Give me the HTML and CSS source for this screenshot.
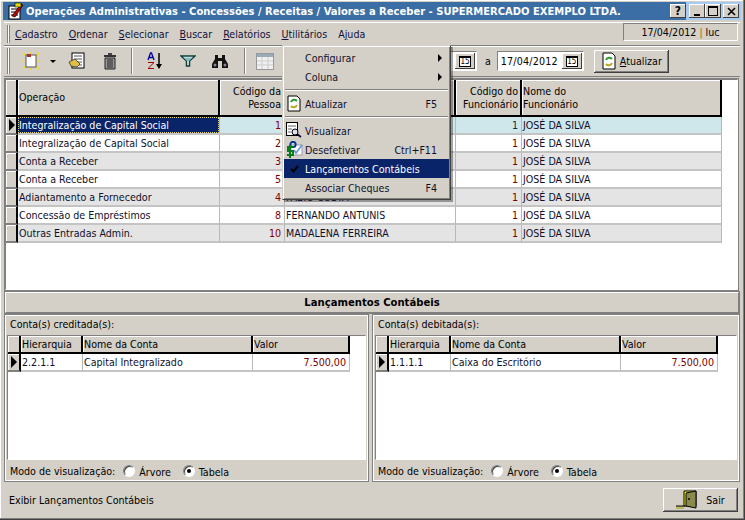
FILE: index.html
```html
<!DOCTYPE html>
<html lang="pt">
<head>
<meta charset="utf-8">
<title>Operações Administrativas</title>
<link rel="stylesheet" href="styles.css">
</head>
<body>
<div class="window">
  <div class="titlebar">
    <svg class="app-icon" width="18" height="18" viewBox="0 0 18 18"><rect x="3" y="4" width="11" height="13" fill="#fff" stroke="#000"/><path d="M5 7h7M5 10h7M5 13h7" stroke="#000"/><path d="M6 14L15 2l2 1L9 15z" fill="#c00" stroke="#000" stroke-width=".7"/><rect x="9" y="1" width="6" height="4" fill="#e8d800" stroke="#000" stroke-width=".6"/></svg>
    <span class="title-text">Operações Administrativas - Concessões / Receitas / Valores a Receber - SUPERMERCADO EXEMPLO LTDA.</span>
    <span class="cap-btn help">?</span>
    <div class="caption-buttons">
      <span class="cap-btn"><svg width="9" height="9" viewBox="0 0 9 9"><rect x="1" y="7" width="6" height="2" fill="#000"/></svg></span>
      <span class="cap-btn"><svg width="10" height="10" viewBox="0 0 10 10"><rect x=".5" y=".5" width="9" height="9" fill="none" stroke="#000"/><rect y="0" width="10" height="2"/></svg></span>
      <span class="cap-gap"></span>
      <span class="cap-btn"><svg width="9" height="9" viewBox="0 0 9 9"><path d="M1 1l7 7M8 1L1 8" stroke="#000" stroke-width="1.6"/></svg></span>
    </div>
  </div>

  <div class="menubar">
    <span class="grip"></span>
    <span class="menu-item"><u>C</u>adastro</span>
    <span class="menu-item"><u>O</u>rdenar</span>
    <span class="menu-item"><u>S</u>elecionar</span>
    <span class="menu-item"><u>B</u>uscar</span>
    <span class="menu-item"><u>R</u>elatórios</span>
    <span class="menu-item"><u>U</u>tilitários</span>
    <span class="menu-item">A<u>j</u>uda</span>
    <div class="session">17/04/2012 <span class="session-sep">|</span> luc</div>
  </div>

  <div class="toolbar">
    <span class="grip tall"></span>
    <span class="tool t-new"><svg width="18" height="18" viewBox="0 0 18 18"><path d="M1 1l3 3M17 1l-3 3M1 17l3-3M17 17l-3-3M9 0v2M0 9h2M16 9h2M9 16v2" stroke="#f0e000" stroke-width="1.4"/><rect x="4" y="3" width="10" height="12" fill="#fff" stroke="#555"/><rect x="5" y="2" width="4" height="3" fill="#a33"/></svg></span>
    <span class="tool-arrow"></span>
    <span class="tool t-edit"><svg width="18" height="18" viewBox="0 0 18 18"><rect x="4" y="1" width="12" height="15" fill="#fff" stroke="#000"/><path d="M6 4h8M6 7h8M8 10h6M8 13h6" stroke="#555"/><path d="M1 10l6-3 5 5-3 3-6-1z" fill="#e0c040" stroke="#333" stroke-width=".8"/></svg></span>
    <span class="tool t-trash"><svg width="14" height="17" viewBox="0 0 14 17"><rect x="5" y="0" width="4" height="2" fill="#444"/><rect x="1" y="2" width="12" height="2" fill="#333"/><path d="M2 5h10v11H2z" fill="#999" stroke="#222"/><path d="M5 6v9M7 6v9M9 6v9" stroke="#222"/></svg></span>
    <span class="tool-sep s1"></span>
    <span class="tool t-sort"><svg width="16" height="18" viewBox="0 0 16 18"><path d="M1 8l2.500-7h1L7 8M2 5.500h4" fill="none" stroke="#0000a0" stroke-width="1.300"/><path d="M1 10h6v1L2 16h5v1H1v-1l5-5H1z" fill="#900"/><path d="M12 1v13" stroke="#000" stroke-width="1.500"/><path d="M9 12h6l-3 5z" fill="#000"/></svg></span>
    <span class="tool t-filter"><svg width="16" height="12" viewBox="0 0 16 12"><path d="M1 1h14L9.500 6v5h-3V6z" fill="#fff" stroke="#103c3c" stroke-width="1.500"/><path d="M3.500 2.500h9L9 6H7z" fill="#7fc0bc"/></svg></span>
    <span class="tool t-find"><svg width="16" height="14" viewBox="0 0 16 14"><path d="M3 1h3v3h4V1h3v4l3 5v4h-6V7H6v7H0v-4l3-5z" fill="#111"/><circle cx="3" cy="11" r="1.500" fill="#889"/><circle cx="13" cy="11" r="1.500" fill="#889"/></svg></span>
    <span class="tool-sep s2"></span>
    <span class="tool t-cal"><svg width="18" height="17" viewBox="0 0 18 17"><rect x=".5" y=".5" width="17" height="16" fill="#f0f0f0" stroke="#999"/><rect x="1" y="1" width="16" height="3" fill="#9ab"/><path d="M1 8h16M1 12h16M6 4v12M12 4v12" stroke="#ccc"/></svg></span>
    <span class="date-from">
      <span class="date-value">17/04/2012</span>
      <span class="cal-btn"><span class="cal-face">15</span></span>
    </span>
    <span class="date-a">a</span>
    <span class="date-to">
      <span class="date-value">17/04/2012</span>
      <span class="cal-btn"><span class="cal-face">15</span></span>
    </span>
    <span class="btn btn-refresh">
      <svg class="refresh-ic" width="14" height="18" viewBox="0 0 14 18"><path d="M1 1h9l3 3v13H1z" fill="#fff" stroke="#000"/><path d="M4 8a3.500 3.500 0 0 1 6-1" fill="none" stroke="#2a9a2a" stroke-width="2"/><path d="M10 11a3.500 3.500 0 0 1-6 1" fill="none" stroke="#b8a820" stroke-width="2"/></svg>
      <span><u>A</u>tualizar</span>
    </span>
  </div>

  <div class="main-grid">
    <table class="grid main">
      <colgroup><col class="c-ind"><col class="c-op"><col class="c-cod"><col class="c-nome"><col class="c-func"><col class="c-nfunc"></colgroup>
      <thead>
        <tr class="tall-head"><th></th><th>Operação</th><th class="ctr">Código da<br>Pessoa</th><th></th><th class="ctr">Código do<br>Funcionário</th><th>Nome do<br>Funcionário</th></tr>
      </thead>
      <tbody>
        <tr class="current"><th class="ind"><span class="arrow"></span></th><td class="sel"><span class="focus">Integralização de Capital Social</span></td><td class="num">1</td><td></td><td class="num dark">1</td><td>JOSÉ DA SILVA</td></tr>
        <tr><th class="ind"></th><td>Integralização de Capital Social</td><td class="num">2</td><td></td><td class="num">1</td><td>JOSÉ DA SILVA</td></tr>
        <tr class="alt"><th class="ind"></th><td>Conta a Receber</td><td class="num">3</td><td></td><td class="num">1</td><td>JOSÉ DA SILVA</td></tr>
        <tr><th class="ind"></th><td>Conta a Receber</td><td class="num">5</td><td></td><td class="num">1</td><td>JOSÉ DA SILVA</td></tr>
        <tr class="alt"><th class="ind"></th><td>Adiantamento a Fornecedor</td><td class="num">4</td><td>FÁBIO COSTA</td><td class="num">1</td><td>JOSÉ DA SILVA</td></tr>
        <tr><th class="ind"></th><td>Concessão de Empréstimos</td><td class="num">8</td><td>FERNANDO ANTUNIS</td><td class="num">1</td><td>JOSÉ DA SILVA</td></tr>
        <tr class="alt"><th class="ind"></th><td>Outras Entradas Admin.</td><td class="num">10</td><td>MADALENA FERREIRA</td><td class="num">1</td><td>JOSÉ DA SILVA</td></tr>
      </tbody>
    </table>
  </div>

  <div class="section-head">Lançamentos Contábeis</div>

  <div class="panels">
    <section class="panel first">
      <div class="panel-label">Conta(s) creditada(s):</div>
      <div class="panel-grid">
        <table class="grid sub">
          <colgroup><col class="s-ind"><col class="s-h"><col class="s-n"><col class="s-v"></colgroup>
          <thead><tr><th></th><th>Hierarquia</th><th>Nome da Conta</th><th>Valor</th></tr></thead>
          <tbody><tr><th class="ind"><span class="arrow"></span></th><td>2.2.1.1</td><td>Capital Integralizado</td><td class="num">7.500,00</td></tr></tbody>
        </table>
      </div>
      <div class="mode">
        <span class="mode-label">Modo de visualização:</span>
        <span class="radio"></span><span class="radio-text">Árvore</span>
        <span class="radio on"></span><span class="radio-text">Tabela</span>
      </div>
    </section>
    <section class="panel">
      <div class="panel-label">Conta(s) debitada(s):</div>
      <div class="panel-grid">
        <table class="grid sub">
          <colgroup><col class="s-ind"><col class="s-h"><col class="s-n"><col class="s-v"></colgroup>
          <thead><tr><th></th><th>Hierarquia</th><th>Nome da Conta</th><th>Valor</th></tr></thead>
          <tbody><tr><th class="ind"><span class="arrow"></span></th><td>1.1.1.1</td><td>Caixa do Escritório</td><td class="num">7.500,00</td></tr></tbody>
        </table>
      </div>
      <div class="mode">
        <span class="mode-label">Modo de visualização:</span>
        <span class="radio"></span><span class="radio-text">Árvore</span>
        <span class="radio on"></span><span class="radio-text">Tabela</span>
      </div>
    </section>
  </div>

  <div class="statusbar">
    <span>Exibir Lançamentos Contábeis</span>
    <span class="btn btn-exit">
      <svg width="22" height="20" viewBox="0 0 22 20"><path d="M8 1h12v15H8z" fill="#ffff00" stroke="#000"/><path d="M10 3l10-2v17l-10-2z" fill="#8a8a50" stroke="#000"/><rect x="12" y="8" width="2" height="2" fill="#222"/><path d="M0 16h8v3H0z" fill="#b8b860"/><path d="M0 16h9" stroke="#000"/></svg>
      <span>Sair</span>
    </span>
  </div>

  <div class="popup">
    <div class="pop-item"><span class="pop-label">Configurar</span><span class="submenu"></span></div>
    <div class="pop-item"><span class="pop-label">Coluna</span><span class="submenu"></span></div>
    <div class="pop-sep"></div>
    <div class="pop-item">
      <svg class="pop-ic" width="14" height="17" viewBox="0 0 14 17"><path d="M1 1h9l3 3v12H1z" fill="#fff" stroke="#000"/><path d="M4 7a3.500 3.500 0 0 1 6-1" fill="none" stroke="#2a9a2a" stroke-width="2"/><path d="M10 10a3.500 3.500 0 0 1-6 1" fill="none" stroke="#b8a820" stroke-width="2"/></svg>
      <span class="pop-label">Atualizar</span><span class="pop-key">F5</span>
    </div>
    <div class="pop-sep"></div>
    <div class="pop-item">
      <svg class="pop-ic wide" width="16" height="16" viewBox="0 0 16 16"><rect x=".5" y=".5" width="11" height="13" fill="#fff" stroke="#000"/><path d="M2 4h8M2 7h4M2 10h3" stroke="#666"/><circle cx="9" cy="10" r="3" fill="#dde" stroke="#000"/><path d="M11 12l4 3" stroke="#003" stroke-width="1.600"/></svg>
      <span class="pop-label">Visualizar</span>
    </div>
    <div class="pop-item">
      <svg class="pop-ic wide" width="17" height="18" viewBox="0 0 17 18"><rect x="5" y="4" width="11" height="10" fill="#fff" stroke="#99b"/><path d="M8 9l2 3 6-8" fill="none" stroke="#69c" stroke-width="1.600"/><circle cx="7" cy="3.500" r="2.700" fill="none" stroke="#003090" stroke-width="1.800"/><path d="M7 6H2v4h5v4H1M4 4v13" fill="none" stroke="#0a7a20" stroke-width="2"/></svg>
      <span class="pop-label">Desefetivar</span><span class="pop-key">Ctrl+F11</span>
    </div>
    <div class="pop-item active">
      <svg class="pop-check" width="9" height="8" viewBox="0 0 9 8"><path d="M1 4l2.500 2.500L8 1" fill="none" stroke="#000" stroke-width="2"/></svg>
      <span class="pop-label">Lançamentos Contábeis</span>
    </div>
    <div class="pop-item"><span class="pop-label">Associar Cheques</span><span class="pop-key">F4</span></div>
  </div>
</div>
</body>
</html>
```

FILE: styles.css
```css
* { box-sizing: border-box; }
html, body { margin: 0; padding: 0; }
body {
  font-family: "DejaVu Sans Condensed", "DejaVu Sans", sans-serif;
  font-stretch: condensed;
  font-size: 10.6px;
  color: #000;
  background: #d4d0c8;
}
.window {
  position: relative;
  width: 745px;
  height: 520px;
  display: flex;
  flex-direction: column;
  padding: 2px 4px 4px;
  background: #d4d0c8;
  border-right: 1px solid #404040;
  border-bottom: 1px solid #404040;
  box-shadow: inset -1px -1px 0 #808080, inset 1px 1px 0 #fff;
  overflow: hidden;
}
.titlebar {
  height: 18px;
  flex: none;
  margin: 0 -1px 0 -1px;
  display: flex;
  align-items: center;
  background: #3a6ea5;
  color: #fff;
  font-weight: bold;
  font-size: 11.1px;
  padding-left: 3px;
}
.app-icon { flex: none; margin-right: 2px; }
.title-text { white-space: nowrap; }
.help { margin-left: auto; }
.caption-buttons { display: flex; padding: 0 2px 0 3px; background: #a6caf0; height: 100%; align-items: center; }
.cap-btn {
  width: 16px; height: 14px; background: #d4d0c8; color: #000;
  display: flex; align-items: center; justify-content: center;
  box-shadow: inset -1px -1px 0 #404040, inset 1px 1px 0 #fff;
  font-size: 12px;
  flex: none;
}
.cap-gap { width: 2px; }
.menubar {
  height: 24px; flex: none; display: flex; align-items: center;
  border-top: 1px solid #fff;
  border-bottom: 1px solid #808080;
  box-shadow: 0 1px 0 #fff;
  margin-top: 2px;
  padding-left: 3px;
}
.grip { width: 3px; height: 18px; flex: none; border-left: 1px solid #808080; border-right: 1px solid #808080; background: #fff; margin-right: 5px; }
.grip.tall { height: 26px; margin-right: 0; }
.menu-item { margin-right: 11px; color: #10103a; white-space: nowrap; }
.session {
  margin-left: auto; align-self: flex-start; width: 115px; height: 18px; margin-right: 2px; text-align: center; line-height: 17px;
  border: 1px solid; border-color: #808080 #fff #fff #808080;
}
.session-sep { color: #b06000; }
.toolbar {
  height: 31px; flex: none; display: flex; align-items: center; padding-left: 3px;
  border-bottom: 1px solid #808080;
}
.tool { display: flex; align-items: center; justify-content: center; flex: none; }
.t-new { margin-left: 12px; width: 18px; }
.tool-arrow { width: 0; height: 0; border: 3px solid transparent; border-top-color: #000; border-bottom: 0; margin-left: 10px; }
.t-edit { margin-left: 12px; width: 18px; }
.t-trash { margin-left: 17px; width: 14px; }
.tool-sep { width: 2px; height: 26px; flex: none; border-left: 1px solid #808080; border-right: 1px solid #fff; }
.s1 { margin-left: 14px; }
.t-sort { margin-left: 14px; width: 16px; }
.t-filter { margin-left: 17px; width: 16px; }
.t-find { margin-left: 16px; width: 16px; }
.s2 { margin-left: 16px; }
.t-cal { margin-left: 10px; width: 18px; }
.date-from, .date-to {
  display: flex; align-items: center; height: 20px; flex: none; background: #fff;
  border: 1px solid; border-color: #808080 #fff #fff #808080;
  box-shadow: 0 0 0 1px #d4d0c8;
}
.date-from { margin-left: 103px; width: 100px; }
.date-to { width: 87px; }
.date-value { flex: 1; padding-left: 3px; white-space: nowrap; letter-spacing: .2px; }
.cal-btn {
  width: 20px; height: 16px; margin-right: 1px; background: #d4d0c8; display: flex; align-items: center; justify-content: center;
  box-shadow: inset -1px -1px 0 #404040, inset 1px 1px 0 #fff;
}
.cal-face { width: 12px; height: 11px; background: #fff; border: 1px solid #000; border-top-width: 2px; font-size: 8px; line-height: 8px; text-align: center; color: #000; }
.date-a { margin: 0 6px 0 8px; }
.btn {
  display: flex; align-items: center; flex: none; background: #d4d0c8;
  box-shadow: inset -1px -1px 0 #404040, inset 1px 1px 0 #fff, inset -2px -2px 0 #808080;
}
.btn-refresh { width: 75px; height: 23px; margin-left: 10px; padding-left: 8px; gap: 4px; }
.main-grid {
  height: 211px; flex: none; margin-top: 2px; margin-left: 1px; margin-right: 2px;
  background: #fff;
  border: 1px solid; border-color: #808080 #fff #fff #808080;
  box-shadow: 0 0 0 1px #808080;
  overflow: hidden;
}
.grid { border-collapse: separate; border-spacing: 0; table-layout: fixed; }
.grid th, .grid td { padding: 0 1px; white-space: nowrap; overflow: hidden; font-weight: normal; text-align: left; }
.grid thead th {
  background: #d4d0c8;
  border-right: 2px solid #000; border-bottom: 2px solid #000;
  box-shadow: inset 1px 1px 0 #fff;
  line-height: 13px;
  vertical-align: middle;
}
.grid thead th.ctr { text-align: right; padding-right: 2px; }
.grid td { border-right: 1px solid #b8b8b8; border-bottom: 2px solid #c4c4c4; height: 18px; line-height: 15px; padding-top: 1px; color: #10102a; background: #fff; }
.grid .ind { background: #d4d0c8; padding: 0; border-right: 2px solid #000; border-bottom: 2px solid #808080; box-shadow: inset 1px 1px 0 #fff; height: 18px; }
.grid tr.alt td { background: #e4e4e4; }
.grid tr.current td { background: #cfe6ea; }
.grid td.sel { background: #0a246a !important; color: #fff; padding: 0; }
.focus { display: block; outline: 1px dotted #e8d870; outline-offset: -1px; padding: 1px 0 0 1px; height: 16px; }
.grid td.num { text-align: right; color: #800000; padding-right: 3px; }
.grid td.num.dark { color: #003040; }
.main { width: 716px; }
.c-ind { width: 12px; }
.c-op { width: 202px; }
.c-cod { width: 65px; }
.c-nome { width: 171px; }
.c-func { width: 66px; }
.c-nfunc { width: 200px; }
.tall-head th { height: 37px; }
.arrow { display: block; width: 0; height: 0; border: 6px solid transparent; border-left: 6px solid #000; border-right: 0; margin-left: 3px; }
.section-head {
  height: 21px; flex: none; margin-top: 2px; text-align: center; font-weight: bold; font-size: 11.2px; line-height: 19px;
  border: 1px solid; border-color: #fff #808080 #808080 #fff;
  box-shadow: 0 0 0 1px #808080;
  margin-left: 1px; margin-right: 1px;
}
.panels { display: flex; gap: 3px; height: 168px; flex: none; margin-top: 1px; }
.panel {
  flex: 1; display: flex; flex-direction: column; padding: 0 2px;
  border: 1px solid #808080; box-shadow: inset 1px 1px 0 #fff, inset -1px -1px 0 #fff;
}
.panel.first { flex: none; width: 365px; }
.panel-label { height: 20px; line-height: 18px; padding-left: 3px; flex: none; }
.panel-grid { height: 125px; flex: none; background: #fff; border: 1px solid; border-color: #808080 #fff #fff #808080; overflow: hidden; }
.sub { width: 342px; }
.s-ind { width: 13px; }
.s-h { width: 62px; }
.s-n { width: 170px; }
.s-v { width: 97px; }
.sub thead th { height: 18px; line-height: 14px; }
.mode { display: flex; align-items: center; flex: 1; padding-left: 3px; }
.mode-label { margin-right: 8px; }
.radio {
  width: 12px; height: 12px; border-radius: 50%; background: #fff; flex: none; margin-right: 4px;
  border: 1px solid; border-color: #808080 #fff #fff #808080; position: relative; box-shadow: inset 1px 1px 0 #404040;
}
.radio.on::after { content: ""; position: absolute; left: 3px; top: 3px; width: 4px; height: 4px; border-radius: 50%; background: #000; }
.radio-text { margin-right: 12px; margin-top: 2px; }
.statusbar { flex: 1; display: flex; align-items: center; justify-content: space-between; padding: 3px 0 0 5px; }
.btn-exit { width: 75px; height: 24px; justify-content: center; gap: 8px; margin-right: 2px; }
.popup {
  position: absolute; left: 282px; top: 45px; width: 169px; height: 155px; padding: 2px 1px;
  background: #d4d0c8;
  border: 1px solid; border-color: #d4d0c8 #404040 #404040 #d4d0c8;
  box-shadow: inset 1px 1px 0 #fff, inset -1px -1px 0 #808080, 2px 2px 0 rgba(0,0,0,.35);
}
.pop-item { position: relative; height: 19px; display: flex; align-items: center; padding-left: 21px; padding-right: 12px; color: #10102a; }
.pop-label { white-space: nowrap; }
.pop-key { margin-left: auto; }
.pop-sep { height: 2px; margin: 3px 1px; border-top: 1px solid #808080; border-bottom: 1px solid #fff; }
.pop-ic { position: absolute; left: 3px; top: 1px; }
.pop-ic.wide { left: 2px; }
.submenu { position: absolute; right: 7px; top: 6px; width: 0; height: 0; border: 4px solid transparent; border-left: 4px solid #000; border-right: 0; }
.pop-item.active { background: #0a246a; color: #fff; }
.pop-check { position: absolute; left: 6px; top: 6px; }
```
